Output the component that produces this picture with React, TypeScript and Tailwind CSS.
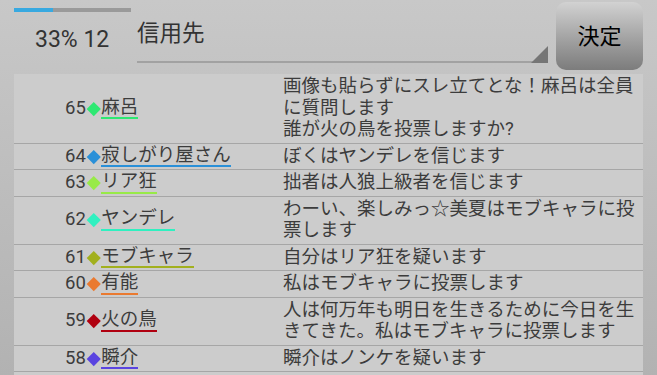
import React from "react";

type Post = { no: number; name: string; color: string; text: string[] };

const posts: Post[] = [
  { no: 65, name: "麻呂", color: "#2ee872", text: ["画像も貼らずにスレ立てとな！麻呂は全員に質問します", "誰が火の鳥を投票しますか?"] },
  { no: 64, name: "寂しがり屋さん", color: "#2a90d8", text: ["ぼくはヤンデレを信じます"] },
  { no: 63, name: "リア狂", color: "#98ea48", text: ["拙者は人狼上級者を信じます"] },
  { no: 62, name: "ヤンデレ", color: "#30f0c0", text: ["わーい、楽しみっ☆美夏はモブキャラに投票します"] },
  { no: 61, name: "モブキャラ", color: "#a2b01e", text: ["自分はリア狂を疑います"] },
  { no: 60, name: "有能", color: "#ea7a30", text: ["私はモブキャラに投票します"] },
  { no: 59, name: "火の鳥", color: "#b00010", text: ["人は何万年も明日を生きるために今日を生きてきた。私はモブキャラに投票します"] },
  { no: 58, name: "瞬介", color: "#5a44e0", text: ["瞬介はノンケを疑います"] },
];

const font = { fontFamily: "Roboto, 'Noto Sans CJK JP', sans-serif" };

export default function App() {
  const progress = 33;

  return (
    <div className="h-screen w-full overflow-hidden bg-gradient-to-b from-[#c8c8c8] to-[#b2b2b2] text-[#3c3c3c]" style={font}>
      {/* ヘッダー */}
      <div className="flex h-[74px] items-start px-[14px]">
        <div className="w-[117px] shrink-0">
          <div className="mt-[8px] h-[4px] w-full bg-[#9a9a9a]">
            <div className="h-full bg-[#38a9e0]" style={{ width: `${progress}%` }} />
          </div>
          <div className="mt-[15px] pl-[21px] text-[23px] leading-[26px] text-[#333]">{progress}% 12</div>
        </div>

        <div className="relative ml-[6px] h-[63px] w-[411px] shrink-0 border-b-2 border-[#a2a2a2]">
          <div className="pt-[20px] text-[22.5px] leading-[26px] text-[#333]">信用先</div>
          <div className="absolute -bottom-[2px] right-0 h-0 w-0 border-b-[17px] border-l-[17px] border-b-[#767676] border-l-transparent" />
        </div>

        <button className="ml-[8px] mt-[2px] flex h-[68px] w-[87px] shrink-0 items-center justify-center rounded-[10px] bg-gradient-to-b from-[#d2d2d2] to-[#7c7c7c] text-[22px] text-black">
          決定
        </button>
      </div>

      {/* ログ */}
      <div className="mx-[14px] bg-[#cccccc]">
        {posts.map((p) => (
          <div key={p.no} className="flex border-b border-[#a6a6a6] py-[2px] text-[18.5px] leading-[21.5px]">
            <div className="flex w-[269px] shrink-0 items-center pl-[51px]">
              <span>{p.no}</span>
              <span className="mx-[3px] h-[9.5px] w-[9.5px] rotate-45" style={{ backgroundColor: p.color }} />
              <span className="border-b-2 leading-[19.5px]" style={{ borderColor: p.color }}>{p.name}</span>
            </div>
            <div className="min-w-0 flex-1 pr-[6px]">
              {p.text.map((t, i) => (
                <div key={i}>{t}</div>
              ))}
            </div>
          </div>
        ))}
        <div className="h-[20px]" />
      </div>
    </div>
  );
}
